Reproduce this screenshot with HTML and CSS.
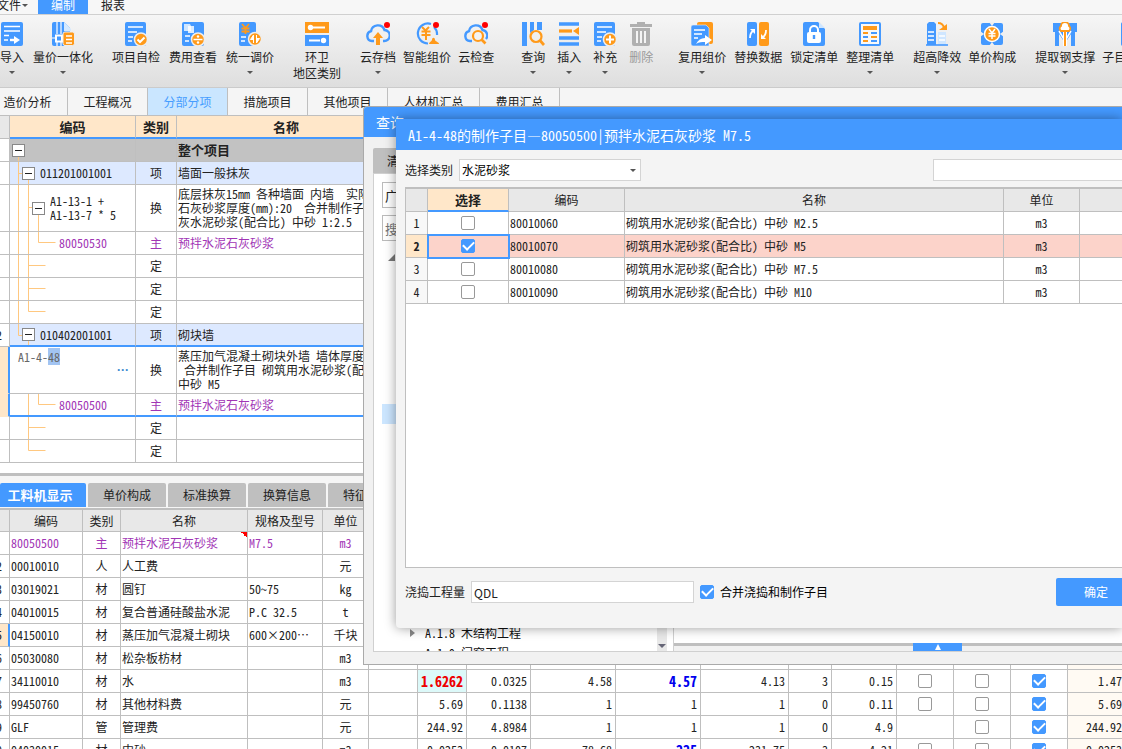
FILE: index.html
```html
<!DOCTYPE html>
<html lang="zh-CN">
<head>
<meta charset="utf-8">
<title>工程计价 - 编制</title>
<link rel="stylesheet" href="styles.css">
</head>
<body>
<main class="app">
  <nav class="menu">
    <button class="menu-item menu-file">文件<i class="caret"></i></button>
    <button class="menu-item menu-on">编制</button>
    <button class="menu-item">报表</button>
  </nav>

  <div class="ribbon">
    <div class="group">
      <button class="tool">
        <svg viewBox="0 0 24 24"><rect x="1" width="22" height="24" rx="2" fill="#49f"/><path d="M4 4.500h16M4 9h16M4 13.500h5M4 18h4" stroke="#fff" stroke-width="1.600"/><path d="M10 18h6" stroke="#fff" stroke-width="2.400"/><path d="M14 14l6 4-6 4z" fill="#fff"/></svg>
        <span>导入</span><i class="caret"></i></button>
      <button class="tool">
        <svg viewBox="0 0 24 24"><path d="M1 2a2 2 0 0 1 2-2h10l6 6v10h-6v8H3a2 2 0 0 1-2-2z" fill="#49f"/><path d="M13 0l7 7v2h-7z" fill="#d4e9ff"/><path d="M6 0v12M10 0v12M6 20v4M10 20v4M1 16h3" stroke="#fff" stroke-width="1.200"/><rect x="5" y="13.500" width="6" height="6" fill="#49f" stroke="#fff" stroke-width="2"/><rect x="12" y="10" width="11.500" height="13.500" rx="2" fill="#ff9a1a" stroke="#eee"/><path d="M15 14h6M15 17.500h6M15 21h6" stroke="#fff" stroke-width="1.600"/></svg>
        <span>量价一体化</span><i class="caret"></i></button>
    </div>
    <div class="group">
      <button class="tool">
        <svg viewBox="0 0 24 24"><rect x="1" width="21" height="24" rx="2" fill="#49f"/><path d="M4 5h15M4 10h9M4 15h5M4 19h4" stroke="#fff" stroke-width="1.600"/><circle cx="17" cy="17.500" r="6.500" fill="#ff9a1a" stroke="#eee" stroke-width="1.500"/><path d="M13.500 17.500l2.500 2.500 4.500-4.500" fill="none" stroke="#fff" stroke-width="2"/></svg>
        <span>项目自检</span></button>
      <button class="tool">
        <svg viewBox="0 0 24 24"><rect x="1" width="22" height="24" rx="2" fill="#49f"/><path d="M3 2h6l1 2v5H3z" fill="#cfe6ff"/><path d="M7 4h6v7H7z" fill="#fff" opacity=".8"/><path d="M4 14h5M4 19h4" stroke="#fff" stroke-width="1.600"/><circle cx="17" cy="17.500" r="6.500" fill="#ff9a1a" stroke="#eee" stroke-width="1.500"/><path d="M12.500 17.500h9" stroke="#fff" stroke-width="1.500"/><circle cx="17" cy="14.500" r="1.200" fill="#fff"/><circle cx="17" cy="20.500" r="1.200" fill="#fff"/></svg>
        <span>费用查看</span></button>
      <button class="tool">
        <svg viewBox="0 0 24 24"><rect x="1" width="17" height="24" rx="2" fill="#49f"/><path d="M4 2l3.500 4L11 2M3.500 6.500h8M3.500 9.500h8M7.500 6v6" fill="none" stroke="#ff9a1a" stroke-width="1.800"/><path d="M3 15h5M3 19h4" stroke="#fff" stroke-width="1.600"/><circle cx="17" cy="17" r="6.500" fill="#ff9a1a" stroke="#eee" stroke-width="1.500"/><path d="M15.500 13v8M15.500 13l-3 4.500h3M18.500 21v-8M18.500 21l3-4.500h-3" fill="#fff" stroke="#fff" stroke-width="1"/></svg>
        <span>统一调价</span><i class="caret"></i></button>
    </div>
    <div class="group">
      <button class="tool">
        <svg viewBox="0 0 24 24"><path fill="#ff9a1a" d="M0 0h24v11H0z"/><path fill="#49f" d="M0 13h24v11H0z"/><path d="M6 5.500h14M4 18.500h11" stroke="#fff" stroke-width="2"/><circle cx="5.500" cy="5.500" r="2.700" fill="#fff"/><circle cx="18.500" cy="18.500" r="2.700" fill="#fff"/></svg>
        <span>环卫</span><span>地区类别</span></button>
    </div>
    <div class="group group-tight">
      <button class="tool">
        <svg viewBox="0 0 24 24"><path d="M8 19H6a5 5 0 0 1-1-9.800A7 7 0 0 1 18.500 8 5.500 5.500 0 0 1 18 19h-1" fill="none" stroke="#49f" stroke-width="2.400"/><path d="M12 10l5 6h-3v7h-4v-7H7z" fill="#ff9a1a"/><circle cx="21" cy="3" r="3" fill="#f00"/></svg>
        <span>云存档</span><i class="caret"></i></button>
      <button class="tool">
        <svg viewBox="0 0 24 24"><path d="M16 2A10 10 0 1 0 13 21.500M19 5a10 10 0 0 1 3 8" fill="none" stroke="#49f" stroke-width="2.200"/><path d="M7 5l3.500 3.500L14 5M6.500 9.500h9M6.500 13h9M11 8.500V18" fill="none" stroke="#ff9a1a" stroke-width="2"/><path d="M14 22c0-2 2-2 3-4 0-3 3-3 3 0 1 2 4 2 4 4z" fill="#ff9a1a"/><circle cx="21" cy="3" r="3" fill="#f00"/></svg>
        <span>智能组价</span></button>
      <button class="tool">
        <svg viewBox="0 0 24 24"><path d="M8 19H6a5 5 0 0 1-1-9.800A7 7 0 0 1 18.500 8 5.500 5.500 0 0 1 22 17" fill="none" stroke="#49f" stroke-width="2.400"/><circle cx="14" cy="14" r="5" fill="#f4f4f4" stroke="#ff9a1a" stroke-width="2.200"/><path d="M17.500 17.500l4 4" stroke="#ff9a1a" stroke-width="2.600"/><circle cx="21" cy="3" r="3" fill="#f00"/></svg>
        <span>云检查</span></button>
    </div>
    <div class="group group-loose">
      <button class="tool">
        <svg viewBox="0 0 24 24"><path d="M1 0h5v24H1zM9 0h4v8l-4 3zM16 0h5v8h-5z" fill="#49f"/><circle cx="15" cy="14.500" r="5.500" fill="none" stroke="#ff9a1a" stroke-width="2.200"/><path d="M19 18.500l4 4.500" stroke="#ff9a1a" stroke-width="2.800"/></svg>
        <span>查询</span><i class="caret"></i></button>
      <button class="tool">
        <svg viewBox="0 0 24 24"><path d="M2 2h20M2 16h20M2 22h20" stroke="#49f" stroke-width="3.600"/><path d="M2 9h13" stroke="#ff9a1a" stroke-width="3.200"/><path d="M16 9l6-4v8z" fill="#ff9a1a"/></svg>
        <span>插入</span><i class="caret"></i></button>
      <button class="tool">
        <svg viewBox="0 0 24 24"><rect x="1" width="21" height="24" rx="2" fill="#49f"/><path d="M4 5h15M4 10h9M4 15h5M4 19h4" stroke="#fff" stroke-width="1.600"/><circle cx="17" cy="17.500" r="6.500" fill="#ff9a1a" stroke="#eee" stroke-width="1.500"/><path d="M13 17.500h8M17 13.500v8" stroke="#fff" stroke-width="2"/></svg>
        <span>补充</span><i class="caret"></i></button>
      <button class="tool" disabled>
        <svg viewBox="0 0 24 24"><path d="M8 0h8v2h7v3H1V2h7zM3 6h18v16a2 2 0 0 1-2 2H5a2 2 0 0 1-2-2z" fill="#b0b0b0"/><path d="M8 9v12M12 9v12M16 9v12" stroke="#f4f4f4" stroke-width="2"/></svg>
        <span>删除</span></button>
    </div>
    <div class="group group-far">
      <button class="tool">
        <svg viewBox="0 0 24 24"><rect x="7" width="16" height="22" rx="2" fill="#ff9a1a"/><path d="M1 5a2 2 0 0 1 2-2h13l3 3v18H3a2 2 0 0 1-2-2z" fill="#49f" stroke="#eee" stroke-width=".6"/><path d="M4 8h11M4 12h8M4 16h4" stroke="#fff" stroke-width="1.600"/><path d="M6 22c2-4 5-6 9-6v-3l7 5-7 5v-3c-3 0-6 0-9 2z" fill="#fff"/></svg>
        <span>复用组价</span><i class="caret"></i></button>
      <button class="tool">
        <svg viewBox="0 0 24 24"><rect x="1" width="10" height="24" rx="2" fill="#49f"/><rect x="13" width="10" height="24" rx="2" fill="#ff9a1a"/><path d="M4 16q0-5 3-7M20 8q0 5-3 7" fill="none" stroke="#fff" stroke-width="1.800"/><path d="M4 7h5v5zM20 17h-5v-5z" fill="#fff"/></svg>
        <span>替换数据</span></button>
      <button class="tool">
        <svg viewBox="0 0 24 24"><path d="M1 2a2 2 0 0 1 2-2h13l7 7v15a2 2 0 0 1-2 2H3a2 2 0 0 1-2-2z" fill="#49f"/><path d="M17 0l6 6h-6z" fill="#cfe6ff"/><path d="M8 11V8a4 4 0 0 1 8 0v3" fill="none" stroke="#fff" stroke-width="2"/><rect x="5" y="10" width="14" height="11" rx="2" fill="#fff"/><path d="M12 13v4" stroke="#49f" stroke-width="2.400"/></svg>
        <span>锁定清单</span></button>
      <button class="tool">
        <svg viewBox="0 0 24 24"><rect x="2" y="1" width="20" height="22" rx="1" fill="#f8f8f8" stroke="#49f" stroke-width="2"/><rect x="5" y="4" width="14" height="4" fill="#ff9a1a"/><path d="M5 11h5M5 19h5M13 15h6" stroke="#ff9a1a" stroke-width="1.800"/><path d="M13 11h6M5 15h5M13 19h6" stroke="#49f" stroke-width="1.800"/></svg>
        <span>整理清单</span><i class="caret"></i></button>
    </div>
    <div class="group group-tight">
      <button class="tool">
        <svg viewBox="0 0 24 24"><path d="M2 2l2-2h5l2 2v21H2z" fill="#49f"/><path d="M3 10h6M3 14h6M3 18h6" stroke="#fff" stroke-width="1.600"/><path d="M13 10h8v13h-8z" fill="#cfe6ff"/><path d="M14 14h6M14 18h6" stroke="#fff" stroke-width="1.500"/><path d="M1 23h22" stroke="#49f" stroke-width="1.600"/><path d="M13 1q5 0 6 5" fill="none" stroke="#ff9a1a" stroke-width="2"/><path d="M14 8h8V2z" fill="#ff9a1a"/></svg>
        <span>超高降效</span><i class="caret"></i></button>
      <button class="tool">
        <svg viewBox="0 0 24 24"><rect x="1" y="1" width="22" height="22" rx="2" fill="#49f"/><path d="M9 0h6l-3 4zM9 24h6l-3-4zM0 9v6l4-3zM24 9v6l-4-3z" fill="#f0f0f0"/><circle cx="12" cy="12" r="7.500" fill="#ff9a1a" stroke="#fff" stroke-width="1.500"/><path d="M9 7l3 4 3-4M8.500 11.500h7M8.500 14h7M12 11v6" fill="none" stroke="#fff" stroke-width="1.500"/></svg>
        <span>单价构成</span></button>
    </div>
    <div class="group group-tight">
      <button class="tool">
        <svg viewBox="0 0 24 24"><path d="M0 1h24v9h-2v14h-4V12l-4 6h-4l-4-6v12H2V10H0z" fill="#49f"/><path d="M6 9l6 10 6-10" fill="none" stroke="#fff" stroke-width="1.500"/><path d="M12 8v16" stroke="#fff" stroke-width="4"/><path d="M12 8v16" stroke="#ff9a1a" stroke-width="2"/><path d="M8 9a3 3 0 0 1 0-5 4 4 0 0 1 8 0 3 3 0 0 1 0 5z" fill="#fff" stroke="#ff9a1a" stroke-width="1.800"/></svg>
        <span>提取钢支撑</span><i class="caret"></i></button>
      <button class="tool">
        <svg viewBox="0 0 24 24"><rect x="1" width="22" height="24" rx="2" fill="#49f"/><path d="M4 6h14M4 12h14M4 18h14" stroke="#fff" stroke-width="1.600"/></svg>
        <span>子目工程量</span></button>
    </div>
  </div>

  <nav class="sheets">
    <button class="sheet">造价分析</button>
    <button class="sheet">工程概况</button>
    <button class="sheet sheet-on">分部分项</button>
    <button class="sheet">措施项目</button>
    <button class="sheet">其他项目</button>
    <button class="sheet sheet-wide">人材机汇总</button>
    <button class="sheet">费用汇总</button>
  </nav>

  <section class="bill">
    <table class="grid bill-grid">
      <colgroup><col class="w-gutter"><col class="w-tree"><col class="w-kind"><col></colgroup>
      <thead><tr><th class="corner"></th><th>编码</th><th>类别</th><th class="name-head">名称</th></tr></thead>
      <tbody>
        <tr class="total"><td class="num"></td>
          <td class="tree"><svg><path d="M8.500 11v12"/></svg><div class="node"><button class="fold" aria-label="折叠"></button></div></td><td></td><td class="strong">整个项目</td></tr>
        <tr class="item"><td class="num"></td>
          <td class="tree"><svg><path d="M8.500 0v23M8.500 11.500h5M18.500 11v12"/></svg><div class="node lv1"><button class="fold" aria-label="折叠"></button>011201001001</div></td><td class="mid">项</td><td>墙面一般抹灰</td></tr>
        <tr class="tall"><td class="num"></td>
          <td class="tree"><svg><path d="M8.500 0v47M18.500 0v47M18.500 22.500h5M28.500 23v24"/></svg><div class="node lv2"><button class="fold" aria-label="折叠"></button><span>A1-13-1 +<br>A1-13-7 * 5</span></div></td><td class="mid">换</td><td class="lines">底层抹灰15mm 各种墙面 内墙  实际
石灰砂浆厚度(mm):20  合并制作子目
灰水泥砂浆(配合比) 中砂 1:2.5</td></tr>
        <tr class="main"><td class="num"></td>
          <td class="tree"><svg><path d="M8.500 0v23M18.500 0v23M28.500 0v10.500h17"/></svg><div class="node lv3">80050530</div></td><td class="mid">主</td><td>预拌水泥石灰砂浆</td></tr>
        <tr><td class="num"></td><td class="tree"><svg><path d="M8.500 0v23M18.500 0v23M18.500 10.500h17"/></svg></td><td class="mid">定</td><td></td></tr>
        <tr><td class="num"></td><td class="tree"><svg><path d="M8.500 0v23M18.500 0v23M18.500 10.500h17"/></svg></td><td class="mid">定</td><td></td></tr>
        <tr><td class="num"></td><td class="tree"><svg><path d="M8.500 0v23M18.500 0v10.500h17"/></svg></td><td class="mid">定</td><td></td></tr>
        <tr class="item before-edit"><td class="num">2</td>
          <td class="tree"><svg><path d="M8.500 0v11.500h5M18.500 11v12"/></svg><div class="node lv1"><button class="fold" aria-label="折叠"></button>010402001001</div></td><td class="mid">项</td><td>砌块墙</td></tr>
        <tr class="tall current"><td class="num"></td>
          <td class="edit"><div class="editor"><span>A1-4-<mark>48</mark></span><button class="more" aria-label="更多">···</button></div></td><td class="mid">换</td><td class="lines">蒸压加气混凝土砌块外墙 墙体厚度
 合并制作子目 砌筑用水泥砂浆(配合比)
中砂 M5</td></tr>
        <tr class="main current current-end"><td class="num"></td>
          <td class="tree"><svg><path d="M18.500 0v23M28.500 0v10.500h17"/></svg><div class="node lv3">80050500</div></td><td class="mid">主</td><td>预拌水泥石灰砂浆</td></tr>
        <tr><td class="num"></td><td class="tree"><svg><path d="M18.500 0v23M18.500 10.500h17"/></svg></td><td class="mid">定</td><td></td></tr>
        <tr><td class="num"></td><td class="tree"><svg><path d="M18.500 0v10.500h17"/></svg></td><td class="mid">定</td><td></td></tr>
      </tbody>
    </table>
  </section>

  <section class="detail">
    <nav class="panes">
      <button class="pane pane-on">工料机显示</button>
      <button class="pane">单价构成</button>
      <button class="pane">标准换算</button>
      <button class="pane">换算信息</button>
      <button class="pane">特征内容</button>
    </nav>
    <table class="grid detail-grid">
      <colgroup><col class="w-gutter"><col class="d-code"><col class="d-kind"><col class="d-name"><col class="d-spec"><col class="d-unit"><col class="d-a"><col class="d-a"><col class="d-b"><col class="d-c"><col class="d-c"><col class="d-d"><col class="d-e"><col class="d-f"><col class="d-g"><col class="d-g"><col class="d-g"><col></colgroup>
      <thead><tr><th></th><th>编码</th><th>类别</th><th>名称</th><th>规格及型号</th><th>单位</th><th colspan="12"></th></tr></thead>
      <tbody>
        <tr class="main"><td class="num"></td><td>80050500</td><td class="mid">主</td><td class="flag">预拌水泥石灰砂浆</td><td>M7.5</td><td class="mid">m3</td><td colspan="12"></td></tr>
        <tr><td class="num">2</td><td>00010010</td><td class="mid">人</td><td>人工费</td><td></td><td class="mid">元</td><td colspan="12"></td></tr>
        <tr><td class="num">3</td><td>03019021</td><td class="mid">材</td><td>圆钉</td><td>50~75</td><td class="mid">kg</td><td colspan="12"></td></tr>
        <tr><td class="num">4</td><td>04010015</td><td class="mid">材</td><td>复合普通硅酸盐水泥</td><td>P.C 32.5</td><td class="mid">t</td><td colspan="12"></td></tr>
        <tr class="current-row"><td class="num">5</td><td>04150010</td><td class="mid">材</td><td>蒸压加气混凝土砌块</td><td>600×200⋯</td><td class="mid">千块</td><td colspan="12"></td></tr>
        <tr><td class="num">6</td><td>05030080</td><td class="mid">材</td><td>松杂板枋材</td><td></td><td class="mid">m3</td><td></td><td></td><td></td><td></td><td></td><td></td><td></td><td></td><td></td><td></td><td></td><td class="sum"></td></tr>
        <tr><td class="num">7</td><td>34110010</td><td class="mid">材</td><td>水</td><td></td><td class="mid">m3</td><td></td><td class="val hot">1.6262</td><td class="val">0.0325</td><td class="val">4.58</td><td class="val blue">4.57</td><td class="val">4.13</td><td class="val">3</td><td class="val">0.15</td><td class="mid"><input type="checkbox" aria-label="暂估"></td><td class="mid"><input type="checkbox" aria-label="锁定"></td><td class="mid"><input type="checkbox" aria-label="打印" checked></td><td class="val sum">1.47</td></tr>
        <tr><td class="num">8</td><td>99450760</td><td class="mid">材</td><td>其他材料费</td><td></td><td class="mid">元</td><td></td><td class="val">5.69</td><td class="val">0.1138</td><td class="val">1</td><td class="val">1</td><td class="val">1</td><td class="val">0</td><td class="val">0.11</td><td class="mid"><input type="checkbox" aria-label="暂估"></td><td class="mid"><input type="checkbox" aria-label="锁定"></td><td class="mid"><input type="checkbox" aria-label="打印" checked></td><td class="val sum">5.69</td></tr>
        <tr><td class="num">9</td><td>GLF</td><td class="mid">管</td><td>管理费</td><td></td><td class="mid">元</td><td></td><td class="val">244.92</td><td class="val">4.8984</td><td class="val">1</td><td class="val">1</td><td class="val">1</td><td class="val">0</td><td class="val">4.9</td><td></td><td class="mid"><input type="checkbox" aria-label="锁定"></td><td class="mid"><input type="checkbox" aria-label="打印" checked></td><td class="val sum">244.92</td></tr>
        <tr><td class="num">0</td><td>04030015</td><td class="mid">材</td><td>中砂</td><td></td><td class="mid">m3</td><td></td><td class="val">0.0253</td><td class="val">0.0107</td><td class="val">78.68</td><td class="val blue">225</td><td class="val">231.75</td><td class="val">3</td><td class="val">4.21</td><td class="mid"><input type="checkbox" aria-label="暂估"></td><td class="mid"><input type="checkbox" aria-label="锁定"></td><td class="mid"><input type="checkbox" aria-label="打印" checked></td><td class="val sum">0.0253</td></tr>
      </tbody>
    </table>
  </section>

  <section class="query" aria-label="查询">
    <header class="query-title">查询</header>
    <div class="query-body">
      <div class="query-tabs"><button class="query-tab">清单</button></div>
      <div class="query-panels">
        <div class="index">
          <input class="field" aria-label="定额库" value="广东">
          <input class="field" aria-label="搜索" placeholder="搜索">
          <ul class="chapters">
            <li><i class="open"></i></li>
            <li class="picked"></li>
            <li class="tail"><i class="shut"></i>A.1.8 木结构工程</li>
            <li><i></i>A.1.9 门窗工程</li>
          </ul>
          <div class="scroll"><i></i></div>
        </div>
        <div class="result"><div class="result-foot"><button class="handle" aria-label="展开"></button></div></div>
      </div>
    </div>
  </section>

  <section class="dialog" role="dialog" aria-labelledby="dialog-title">
    <header class="dialog-title" id="dialog-title">A1-4-48的制作子目—80050500|预拌水泥石灰砂浆 M7.5</header>
    <div class="dialog-bar">
      <label for="kind">选择类别</label>
      <div class="select"><select id="kind"><option>水泥砂浆</option></select></div>
      <input class="search" type="text" aria-label="查找">
    </div>
    <div class="dialog-list">
      <table class="grid pick-grid">
        <colgroup><col class="p-num"><col class="p-pick"><col class="p-code"><col class="p-name"><col class="p-unit"><col></colgroup>
        <thead><tr><th></th><th class="pick-head">选择</th><th>编码</th><th>名称</th><th>单位</th><th class="last"></th></tr></thead>
        <tbody>
          <tr><td class="idx">1</td><td class="mid"><input type="checkbox" aria-label="选择 80010060"></td><td>80010060</td><td>砌筑用水泥砂浆(配合比) 中砂 M2.5</td><td class="mid">m3</td><td class="last"></td></tr>
          <tr class="chosen"><td class="idx">2</td><td class="mid focus"><input type="checkbox" aria-label="选择 80010070" checked></td><td>80010070</td><td>砌筑用水泥砂浆(配合比) 中砂 M5</td><td class="mid">m3</td><td class="last"></td></tr>
          <tr><td class="idx">3</td><td class="mid"><input type="checkbox" aria-label="选择 80010080"></td><td>80010080</td><td>砌筑用水泥砂浆(配合比) 中砂 M7.5</td><td class="mid">m3</td><td class="last"></td></tr>
          <tr><td class="idx">4</td><td class="mid"><input type="checkbox" aria-label="选择 80010090"></td><td>80010090</td><td>砌筑用水泥砂浆(配合比) 中砂 M10</td><td class="mid">m3</td><td class="last"></td></tr>
        </tbody>
      </table>
    </div>
    <footer class="dialog-foot">
      <label for="qty">浇捣工程量</label>
      <input class="qty" id="qty" type="text" value="QDL">
      <label class="merge"><input type="checkbox" checked>合并浇捣和制作子目</label>
      <button class="ok">确定</button>
    </footer>
  </section>
</main>
</body>
</html>
```
FILE: styles.css
```css
:root {
  --blue: #4499ff;
  --line: #bfbfbf;
  --ink: #222;
  --sand: #ffe7c9;
  --ui: "Noto Sans CJK SC", sans-serif;
  --mono: "Noto Sans Mono CJK SC", "Liberation Serif", "Noto Sans CJK SC", sans-serif;
}
* { box-sizing: border-box; }
body { margin: 0; overflow: hidden; font: 12px/16px var(--ui); color: var(--ink); }
button, input, select { font: inherit; color: inherit; margin: 0; padding: 0; border: 0; background: none; }
i { font-style: normal; }
.app { position: relative; display: flex; flex-direction: column; height: 100vh; overflow: hidden; background: #f5f5f5; }
.caret { border: 3px solid transparent; border-top-color: #555; border-bottom: 0; }

.menu { display: flex; height: 15px; flex: none; border-bottom: 1px solid #d0d0d0; background: #f7f7f7; overflow: hidden; }
.menu-item { width: 50px; height: 14px; line-height: 10px; padding-bottom: 4px; }
.menu-file { display: flex; align-items: center; justify-content: flex-end; width: 38px; padding-right: 10px; gap: 1px; white-space: nowrap; }
.menu-on { background: var(--blue); color: #fff; }

.ribbon { display: flex; flex: none; gap: 13px; height: 73px; margin-left: -3px; padding-top: 7px; border-bottom: 1px solid #cbcbcb; background: linear-gradient(#f6f6f6, #dedede); overflow: hidden; }
.group { display: flex; flex: none; gap: 3px; }
.group-tight { gap: 1px; }
.group-loose { gap: 6px; margin-left: 8px; }
.group-far { gap: 2px; margin-left: 6px; }
.tool { display: flex; flex: none; flex-direction: column; align-items: center; padding: 0 3px; white-space: nowrap; }
.tool svg { width: 24px; height: 24px; margin-bottom: 3px; }
.tool .caret { margin-top: 6px; }
.tool:disabled { color: #999; }

.sheets { display: flex; flex: none; height: 27px; margin-left: -12px; background: #f5f5f5; }
.sheet { flex: none; width: 80px; border-right: 1px solid var(--line); }
.sheet-wide { width: 92px; }
.sheet-on { background: #cae6ff; color: #469dff; }

.grid { width: 100%; table-layout: fixed; border-spacing: 0; font-family: var(--mono); }
.grid th, .grid td { height: 23px; padding: 0 1px; border: solid var(--line); border-width: 0 1px 1px 0; white-space: nowrap; overflow: hidden; text-align: left; line-height: 14px; }
.grid th { background: #e8e8e8; text-align: center; font-weight: 400; }
.grid .mid { text-align: center; }
.grid .num { padding: 0; text-indent: -4px; overflow: visible; }
.grid .val { text-align: right; padding-right: 3px; }
.grid .main td { color: #a135b5; }
.w-gutter { width: 10px; }

.bill { flex: none; height: 361px; border-top: 1px solid var(--line); border-bottom: 3px solid var(--line); background: #fff; }
.w-tree { width: 126px; }
.w-kind { width: 41px; }
.bill-grid th { background: var(--sand); border-bottom: 2px solid var(--blue); font-weight: 700; font-size: 13px; }
.bill-grid .corner { background: #e8e8e8; border-bottom: 1px solid var(--line); }
.bill-grid .name-head { text-align: left; padding-left: 96px; }
.bill-grid .total td { background: #c2c2c2; }
.bill-grid .total .num, .bill-grid .item .num { background: #fff; }
.bill-grid .item td { background: #dde9ff; }
.bill-grid .strong { font-weight: 700; font-size: 13px; }
.bill-grid .tall td { height: 47px; }
.bill-grid .lines { white-space: pre; }
.bill-grid .tree { position: relative; padding: 0; }
.tree svg { position: absolute; inset: 0; width: 100%; height: 100%; fill: none; stroke: #ffc880; }
.node { position: relative; display: flex; align-items: center; gap: 5px; padding-left: 2px; }
.lv1 { padding-left: 12px; }
.lv2 { padding-left: 22px; }
.lv3 { padding-left: 49px; }
.fold { display: flex; align-items: center; justify-content: center; width: 13px; height: 13px; border: 1px solid #888; background: #fff; }
.fold::before { content: ""; width: 7px; height: 1px; background: #222; }
.bill-grid .before-edit td:not(.num) { border-bottom: 2px solid var(--blue); }
.bill-grid .current .num { background: var(--sand); border-right: 2px solid var(--blue); border-bottom-color: var(--sand); }
.bill-grid .current-end td:not(.num) { border-bottom: 2px solid var(--blue); }
.bill-grid .edit { vertical-align: top; padding: 3px 6px 0 8px; color: #666; }
.editor { display: flex; flex-direction: column; }
.editor mark { background: #a2c4f2; color: inherit; }
.more { align-self: flex-end; font: 700 12px/12px "Liberation Sans", sans-serif; color: #3a8ad0; }

.detail { flex: 1; min-height: 0; padding-top: 7px; overflow: hidden; }
.panes { display: flex; gap: 2px; height: 25px; padding-bottom: 1px; }
.pane { flex: none; width: 78px; border-radius: 2px 2px 0 0; background: var(--line); }
.pane-on { width: 86px; padding-right: 6px; background: var(--blue); color: #fff; font-weight: 700; font-size: 13px; white-space: nowrap; }
.detail-grid { border-top: 2px solid var(--line); background: #fff; }
.detail-grid th { height: 22px; }
.d-code { width: 73px; } .d-kind { width: 38px; } .d-name { width: 127px; } .d-spec { width: 75px; }
.d-unit { width: 46px; } .d-a { width: 49px; } .d-b { width: 64px; } .d-c { width: 85px; }
.d-d { width: 88px; } .d-e { width: 43px; } .d-f { width: 65px; } .d-g { width: 57px; }
.detail-grid .flag { background: linear-gradient(45deg, transparent 50%, #f00 50%) right top / 6px 6px no-repeat; }
.detail-grid .hot { background: #dcf9f9; color: #ee0000; font-weight: 700; font-size: 14px; }
.detail-grid .blue { color: #0000ee; font-weight: 700; font-size: 14px; }
.detail-grid .sum { background: #fffaf3; padding-right: 0; border-right: 0; }
.detail-grid .current-row .num { background: var(--sand); border-right: 2px solid var(--blue); }

input[type="checkbox"] { appearance: none; display: inline-flex; align-items: center; justify-content: center; flex: none; width: 14px; height: 14px; border: 1px solid #999; border-radius: 2px; background: #fff; vertical-align: middle; }
input[type="checkbox"]:checked { border-color: var(--blue); background: var(--blue); }
input[type="checkbox"]:checked::before { content: ""; width: 9px; height: 5px; margin-bottom: 3px; border: solid #fff; border-width: 0 0 2px 2px; transform: rotate(-45deg); }
.grid td input[type="checkbox"] { display: flex; margin: 0 auto; }

.query { position: absolute; inset: 106px 0 84px 363px; display: flex; flex-direction: column; border: 1px solid #aaa; border-right: 0; border-radius: 4px 0 0 0; background: #f1f1f1; overflow: hidden; }
.query-title { flex: none; height: 30px; padding-left: 12px; font-size: 14px; line-height: 31px; background: var(--blue); color: #fff; }
.query-body { flex: 1; min-height: 0; display: flex; flex-direction: column; padding: 11px 0 12px 9px; }
.query-tabs { flex: none; }
.query-tab { display: block; width: 80px; height: 25px; padding-left: 14px; border-radius: 2px 0 0 0; background: var(--line); text-align: left; }
.query-panels { flex: 1; min-height: 0; display: flex; border: 1px solid #d0d0d0; border-right: 0; background: #fff; overflow: hidden; }
.index { position: relative; flex: none; width: 300px; padding: 8px; border-right: 1px solid #d0d0d0; font-family: var(--mono); }
.field { display: block; width: 270px; height: 26px; margin-bottom: 7px; padding-left: 2px; border: 1px solid #bbb; background: #fff; font-size: 13px; }
.chapters { list-style: none; margin: 0; padding: 0; line-height: 20px; color: #111; }
.chapters li { display: flex; align-items: center; gap: 12px; height: 20px; padding-left: 28px; }
.chapters li:first-child { padding-left: 6px; height: 18px; }
.chapters i { width: 3px; }
.chapters .open { width: 0; border-left: 7px solid transparent; border-bottom: 7px solid #777; }
.chapters .shut { width: 0; margin-right: -2px; border: 4px solid transparent; border-left: 5px solid #888; border-right: 0; }
.chapters .picked { margin-top: 138px; background: #cce6ff; }
.chapters .tail { margin-top: 199px; }
.scroll { position: absolute; inset: 0 6px 0 auto; width: 10px; display: flex; align-items: flex-end; background: #e8e8e8; padding: 0 1px 3px; }
.scroll i { border: 4px solid transparent; border-top: 4px solid #667; border-bottom: 0; }
.result { flex: 1; display: flex; align-items: flex-end; }
.result-foot { flex: 1; height: 8px; padding-left: 239px; border-top: 3px solid var(--line); background: #f1f1f1; }
.handle { display: flex; align-items: center; justify-content: center; width: 49px; height: 8px; margin-top: -3px; background: var(--blue); }
.handle::before { content: ""; border: 3px solid transparent; border-bottom: 6px solid #fff; border-top: 0; }

.dialog { position: absolute; inset: 119px 0 121px 396px; display: flex; flex-direction: column; border-radius: 4px 0 0 4px; background: #f4f4f4; box-shadow: 0 0 12px rgba(0, 0, 0, .4); }
.dialog-title { flex: none; height: 31px; padding-left: 12px; font: 14px/32px var(--mono); background: var(--blue); color: #fff; }
.dialog-bar { display: flex; flex: none; align-items: center; height: 37px; padding: 9px 0 6px 9px; gap: 6px; }
.select { position: relative; width: 182px; }
.select select { appearance: none; width: 100%; height: 22px; padding-left: 2px; border: 1px solid #d4d4d4; background: #fff; color: #000; }
.select::after { content: ""; position: absolute; right: 5px; top: 10px; border: 3px solid transparent; border-top-color: #555; border-bottom: 0; }
.search { width: 189px; height: 22px; margin-left: auto; border: 1px solid #d4d4d4; border-right: 0; background: #fff; }
.dialog-list { flex: 1; min-height: 0; margin-left: 9px; border: solid var(--line); border-width: 2px 0 1px 1px; background: #fff; }
.p-num { width: 22px; } .p-pick { width: 81px; } .p-code { width: 116px; } .p-name { width: 379px; } .p-unit { width: 76px; }
.pick-grid .idx { background: #f8f8f8; text-align: center; padding: 0; }
.pick-grid .pick-head { background: var(--sand); border-bottom: 2px solid var(--blue); font-weight: 700; font-size: 13px; }
.pick-grid .last { border-right: 0; }
.pick-grid .chosen td { background: #fcd3ca; }
.pick-grid .chosen .idx { background: var(--sand); font-weight: 700; }
.pick-grid .focus { outline: 2px solid var(--blue); outline-offset: -1px; }
.dialog-foot { display: flex; flex: none; align-items: center; height: 60px; padding: 0 0 12px 9px; gap: 6px; }
.qty { width: 223px; height: 22px; padding-left: 2px; border: 1px solid #d4d4d4; background: #fff; }
.merge { display: flex; align-items: center; gap: 6px; color: #000; }
.ok { width: 66px; height: 28px; margin-left: auto; padding-left: 14px; border-radius: 2px 0 0 2px; background: var(--blue); color: #fff; }
```
